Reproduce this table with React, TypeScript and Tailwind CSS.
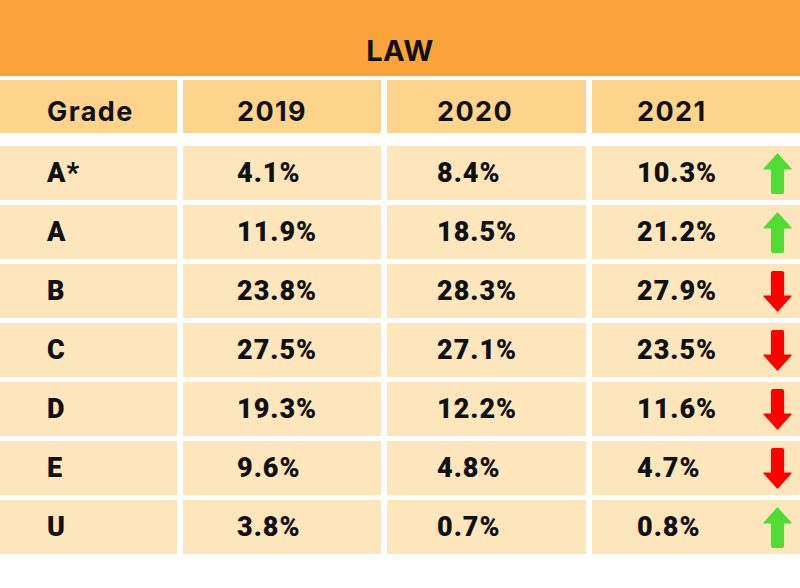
import React from "react";

const rows: { g: string; a: string; b: string; c: string; up: boolean }[] = [
  { g: "A*", a: "4.1%", b: "8.4%", c: "10.3%", up: true },
  { g: "A", a: "11.9%", b: "18.5%", c: "21.2%", up: true },
  { g: "B", a: "23.8%", b: "28.3%", c: "27.9%", up: false },
  { g: "C", a: "27.5%", b: "27.1%", c: "23.5%", up: false },
  { g: "D", a: "19.3%", b: "12.2%", c: "11.6%", up: false },
  { g: "E", a: "9.6%", b: "4.8%", c: "4.7%", up: false },
  { g: "U", a: "3.8%", b: "0.7%", c: "0.8%", up: true },
];

function Arrow({ up }: { up: boolean }) {
  const color = up ? "#4fdc34" : "#ff0000";
  return (
    <svg
      width="29"
      height="41"
      viewBox="0 0 29 41"
      className={up ? "" : "rotate-180"}
    >
      <path
        d="M14.5 1 L28 16 L20.5 16 L20.5 38.5 Q20.5 40.5 18.5 40.5 L10.5 40.5 Q8.5 40.5 8.5 38.5 L8.5 16 L1 16 Z"
        fill={color}
        stroke={color}
        strokeWidth="1.2"
        strokeLinejoin="round"
      />
    </svg>
  );
}

const data = "font-['Roboto',sans-serif] font-black text-[27px] tracking-[1px] text-[#111]";
const head = "font-['Inter',sans-serif] font-bold text-[27px] tracking-[1.4px] text-[#111]";

export default function App() {
  return (
    <div className="w-[800px] h-[588px] bg-white flex flex-col">
      <div className="h-[76px] bg-[#fba33b] flex items-center justify-center pt-[25px]">
        <span className="font-['Inter',sans-serif] font-bold text-[29px] tracking-[0.5px] text-[#111] leading-none">
          LAW
        </span>
      </div>
      <div className="mt-[4px] grid grid-cols-[177px_198px_199px_208px] gap-x-[6px] h-[53px]">
        <div className={`bg-[#fdd48b] flex items-center pl-[47px] pt-[11px] ${head}`}>Grade</div>
        <div className={`bg-[#fdd48b] flex items-center pl-[54px] pt-[11px] ${head}`}>2019</div>
        <div className={`bg-[#fdd48b] flex items-center pl-[50px] pt-[11px] ${head}`}>2020</div>
        <div className={`bg-[#fdd48b] flex items-center pl-[45px] pt-[11px] ${head}`}>2021</div>
      </div>
      <div className="mt-[13px] flex flex-col gap-y-[5px]">
        {rows.map((r) => (
          <div key={r.g} className="grid grid-cols-[177px_198px_199px_208px] gap-x-[6px] h-[54px]">
            <div className={`bg-[#fde6bb] flex items-center pl-[47px] ${data}`}>{r.g}</div>
            <div className={`bg-[#fde6bb] flex items-center pl-[54px] ${data}`}>{r.a}</div>
            <div className={`bg-[#fde6bb] flex items-center pl-[50px] ${data}`}>{r.b}</div>
            <div className={`bg-[#fde6bb] flex items-center justify-between pl-[45px] pr-[8px] ${data}`}>
              <span>{r.c}</span>
              <Arrow up={r.up} />
            </div>
          </div>
        ))}
      </div>
    </div>
  );
}
